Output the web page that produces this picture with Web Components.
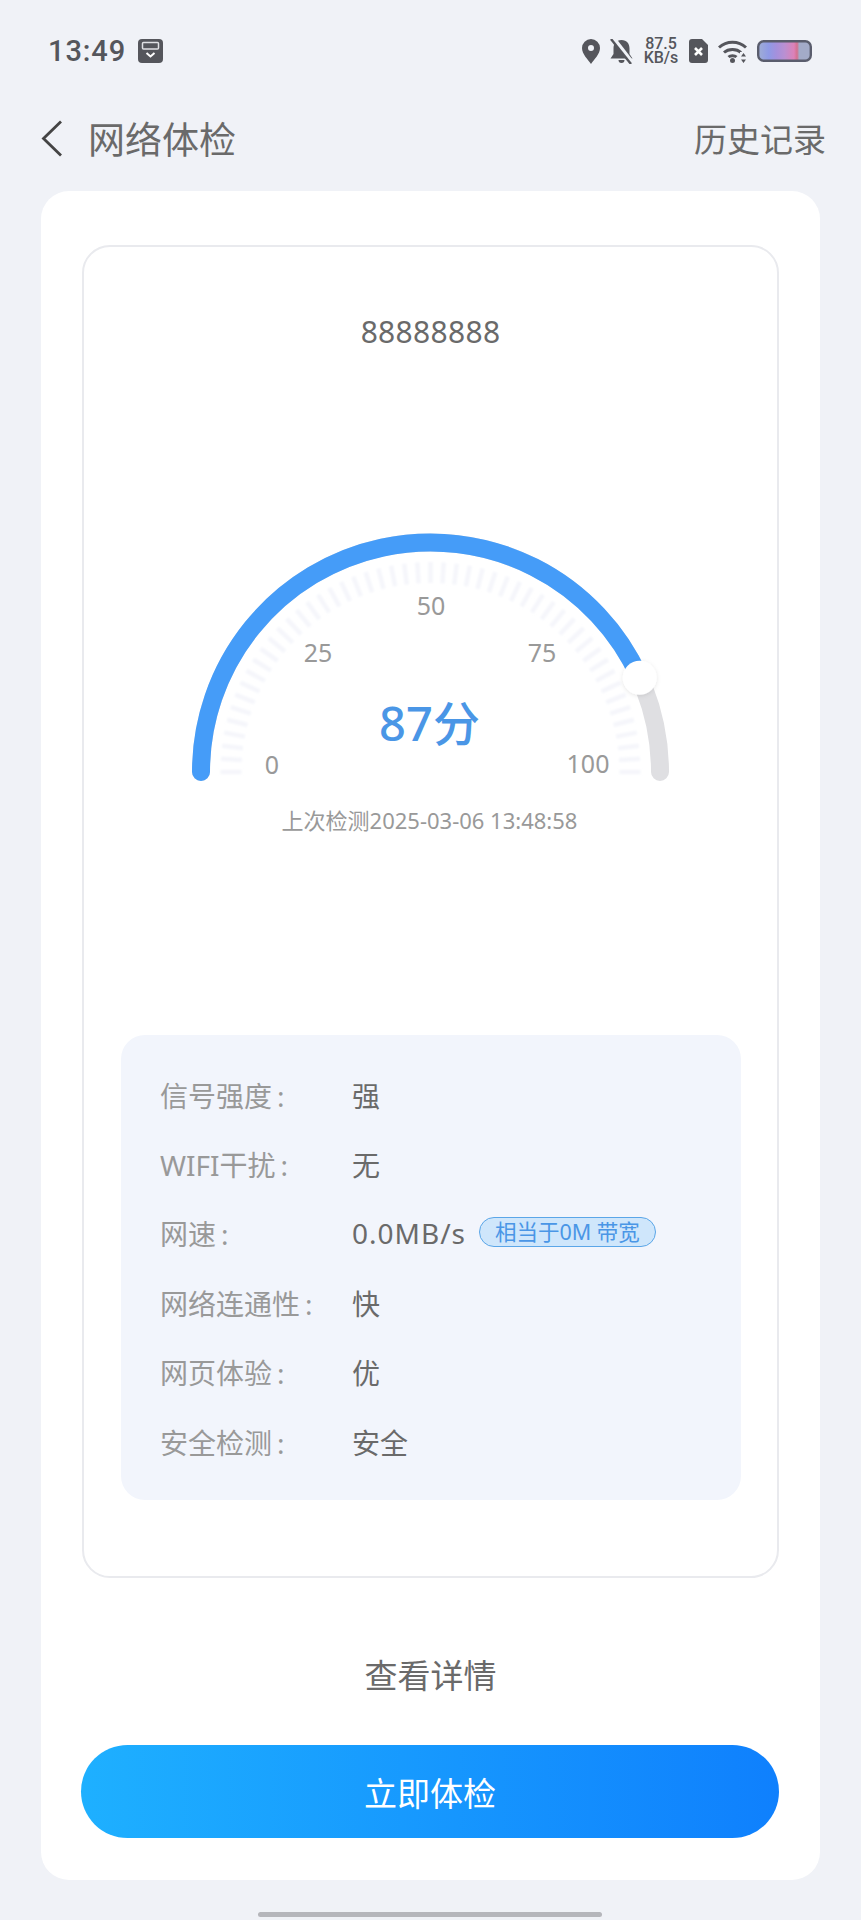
<!DOCTYPE html>
<html lang="zh">
<head>
<meta charset="utf-8">
<title>网络体检</title>
<style>
  html, body { margin: 0; padding: 0; background: #f0f2f7; }
  body { font-family: "Noto Sans", "Noto Sans CJK SC", sans-serif; width: 861px; height: 1920px; overflow: hidden; }
</style>
</head>
<body>
<net-check-page>
  <status-bar slot="status"></status-bar>
  <nav-bar slot="nav" heading="网络体检" action="历史记录"></nav-bar>
  <report-card slot="card" ssid="88888888">
    <score-gauge slot="gauge" score="87" checked="上次检测2025-03-06 13:48:58"></score-gauge>
    <info-panel slot="info">
      <info-row label="信号强度" value="强"></info-row>
      <info-row label="WIFI干扰" value="无"></info-row>
      <info-row label="网速" value="0.0MB/s" badge="相当于0M 带宽"></info-row>
      <info-row label="网络连通性" value="快"></info-row>
      <info-row label="网页体验" value="优"></info-row>
      <info-row label="安全检测" value="安全"></info-row>
    </info-panel>
  </report-card>
</net-check-page>

<script>
// small helper, every element just sets its shadow html once
class Base extends HTMLElement {
  render(html) {
    this.attachShadow({mode: 'open'}).innerHTML = html;
  }
}

class NetCheckPage extends Base {
  constructor() {
    super();
    this.render(`
      <style>
        :host { display: flex; flex-direction: column; width: 861px; height: 1920px; position: relative; }
        .sheet {
          margin: 0 41px;
          height: 1689px;
          box-sizing: border-box;
          background: #fff;
          border-radius: 28px;
          padding: 54px 41px 0;
        }
        .detail {
          height: 167px;
          display: flex;
          align-items: center;
          justify-content: center;
          font-size: 33px;
          color: #6a6a6a;
          box-sizing: border-box;
          padding-top: 56px;
          padding-bottom: 31px;
        }
        .go {
          height: 93px;
          margin-left: -1px;
          border-radius: 47px;
          background: linear-gradient(90deg, #1eb0ff, #0f80fd);
          color: #fff;
          font-size: 33px;
          display: flex;
          align-items: center;
          justify-content: center;
        }
        .home { position: absolute; left: 258px; top: 1912px; width: 344px; height: 5px; border-radius: 3px; background: #b5b6bb; }
      </style>
      <slot name="status"></slot>
      <slot name="nav"></slot>
      <div class="sheet">
        <slot name="card"></slot>
        <div class="detail">查看详情</div>
        <div class="go">立即体检</div>
      </div>
      <div class="home"></div>
    `);
  }
}

class StatusBar extends Base {
  constructor() {
    super();
    this.render(`
      <style>
        :host { display: flex; align-items: center; height: 102px; padding: 0 49px 0 48px; box-sizing: border-box; color: #55565c; }
        .time { font: 500 29px Roboto, sans-serif; letter-spacing: 0.9px; }
        .left { display: flex; align-items: center; gap: 12px; }
        .right { margin-left: auto; display: flex; align-items: center; gap: 10px; }
        svg { display: block; }
        .speed { font: 500 16px/14px Roboto, sans-serif; text-align: center; width: 36px; }
      </style>
      <div class="left">
        <span class="time">13:49</span>
        <svg width="25" height="24" viewBox="0 0 25 24">
          <rect width="25" height="24" rx="4" fill="#55565c"/>
          <rect x="4.500" y="3.500" width="16" height="6.500" rx="1" fill="none" stroke="#dfe0e4" stroke-width="1.500"/>
          <path fill="none" stroke="#fff" stroke-width="2" d="M8.500 14l4 3.500 4-3.500"/>
        </svg>
      </div>
      <div class="right">
        <svg width="18" height="25" viewBox="0 0 18 25"><path fill="#55565c" fill-rule="evenodd" d="M9 0a9 9 0 0 1 9 9c0 6.200-6 11.500-9 16C6 20.500 0 15.200 0 9a9 9 0 0 1 9-9zm0 6a3 3 0 1 0 0 6 3 3 0 0 0 0-6z"/></svg>
        <svg width="23" height="25" viewBox="0 0 23 25"><path fill="#55565c" d="M11.500 1c5.500 0 8 4 8 8.500V15l3 4.500H.5l3-4.500V9.500C3.500 5 6 1 11.500 1zM8.500 21h6a3 3 0 0 1-6 0z"/><path stroke="#f0f2f7" stroke-width="4.500" d="M3 -1l20 26"/><path stroke="#55565c" stroke-width="2.400" d="M1 0l20 25"/></svg>
        <div class="speed">87.5 KB/s</div>
        <svg width="19" height="24" viewBox="0 0 19 24"><path fill="#55565c" d="M3 0h10l6 6v15a3 3 0 0 1-3 3H3a3 3 0 0 1-3-3V3a3 3 0 0 1 3-3z"/><path stroke="#fff" stroke-width="2.600" d="M6 9l7 7M13 9l-7 7"/></svg>
        <svg width="29" height="23" viewBox="0 0 29 23"><g fill="none" stroke="#55565c" stroke-width="3"><path d="M1 7.500C8.500 .5 20.500 .5 28 7.500"/><path d="M6 12.500c4.500-4 12.500-4 17 0"/><path d="M10.500 17c2-1.800 6-1.800 8 0"/></g><circle cx="14.500" cy="20.500" r="2.500" fill="#55565c"/><path fill="#f0f2f7" d="M22 12h7v11h-7z"/><path fill="#55565c" d="M25.500 13l2.500 3.500h-5zM25.500 23L23 19.500h5z"/></svg>
        <svg width="55" height="22" viewBox="0 0 55 22">
          <defs><linearGradient id="b"><stop offset="0" stop-color="#a0aed4"/><stop offset=".2" stop-color="#8f9ae6"/><stop offset=".35" stop-color="#a590dc"/><stop offset=".5" stop-color="#b990d2"/><stop offset=".68" stop-color="#dc82b8"/><stop offset=".74" stop-color="#d4708e"/><stop offset=".78" stop-color="#a3abc8"/><stop offset="1" stop-color="#a3abc8"/></linearGradient></defs>
          <rect x="1.200" y="1.200" width="52.600" height="19.600" rx="5.500" fill="url(#b)" stroke="#5a5d6d" stroke-width="2.400"/>
        </svg>
      </div>
    `);
  }
}

class NavBar extends Base {
  constructor() {
    super();
    const heading = this.getAttribute('heading');
    const action = this.getAttribute('action');
    this.render(`
      <style>
        :host { display: flex; align-items: center; height: 89px; padding: 0 35px 17px 41px; box-sizing: border-box; }
        svg { display: block; margin-right: 25px; }
        .t { font-size: 37px; color: #6a6a6a; }
        .a { margin-left: auto; font-size: 33px; color: #6a6a6a; }
      </style>
      <svg width="22" height="37" viewBox="0 0 22 37"><path fill="none" stroke="#444" stroke-width="2.800" d="M20 1.500L2.500 18.500 20 35.500"/></svg>
      <span class="t">${heading}</span>
      <span class="a">${action}</span>
    `);
  }
}

class ReportCard extends Base {
  constructor() {
    super();
    const ssid = this.getAttribute('ssid');
    this.render(`
      <style>
        :host {
          display: block;
          height: 1333px;
          box-sizing: border-box;
          border: 2px solid #e9eaee;
          border-radius: 28px;
          padding: 0 30px;
        }
        .ssid { height: 170px; padding-top: 65px; box-sizing: border-box; text-align: center; font-size: 30px; line-height: 40px; color: #6a6a6a; letter-spacing: .3px; }
      </style>
      <div class="ssid">${ssid}</div>
      <slot name="gauge"></slot>
      <slot name="info"></slot>
    `);
  }
}

class ScoreGauge extends Base {
  constructor() {
    super();
    const score = Number(this.getAttribute('score'));
    const checked = this.getAttribute('checked');
    // svg origin sits at page (114, 417)
    const cx = 316.5, cy = 355, r = 229.5;
    const pt = (deg, rad) => {
      const a = deg * Math.PI / 180;
      return [cx - rad * Math.cos(a), cy - rad * Math.sin(a)];
    };
    const arc = (from, to) => {
      const [x0, y0] = pt(from, r);
      const [x1, y1] = pt(to, r);
      return `M${x0.toFixed(2)} ${y0.toFixed(2)}A${r} ${r} 0 0 1 ${x1.toFixed(2)} ${y1.toFixed(2)}`;
    };
    let ticks = '';
    for (let d = 0; d <= 180; d += 3.6) {
      const [a, b] = pt(d, 189);
      const [c, e] = pt(d, 210);
      ticks += `<line x1="${a.toFixed(1)}" y1="${b.toFixed(1)}" x2="${c.toFixed(1)}" y2="${e.toFixed(1)}"/>`;
    }
    // thumb sits a touch short of the true 1.8deg per point
    const end = score * 1.79;
    const [tx, ty] = pt(end, r);
    this.render(`
      <style>
        :host { display: block; height: 618px; }
        svg { display: block; overflow: visible; }
        text { font-family: "Noto Sans", "Noto Sans CJK SC", sans-serif; }
        .n { font-size: 25px; fill: #999; text-anchor: middle; dominant-baseline: central; }
      </style>
      <svg width="625" height="448" viewBox="0 0 625 448">
        <defs>
          <filter id="s" x="-40%" y="-40%" width="180%" height="180%"><feDropShadow dx="0" dy="1" stdDeviation="2" flood-color="#000" flood-opacity=".1"/></filter>
          <filter id="soft" x="-5%" y="-5%" width="110%" height="110%"><feGaussianBlur stdDeviation="1"/></filter>
        </defs>
        <g stroke="#f5f6fb" stroke-width="4.500" filter="url(#soft)">${ticks}</g>
        <path d="${arc(0, 180)}" fill="none" stroke="#dfdfe2" stroke-width="18" stroke-linecap="round"/>
        <path d="${arc(0, end)}" fill="none" stroke="#459cf8" stroke-width="18" stroke-linecap="round"/>
        <circle cx="${tx.toFixed(1)}" cy="${ty.toFixed(1)}" r="17" fill="#fff" filter="url(#s)"/>
        <text class="n" x="158" y="347">0</text>
        <text class="n" x="204" y="235">25</text>
        <text class="n" x="317" y="188">50</text>
        <text class="n" x="428" y="235">75</text>
        <text class="n" x="474" y="346">100</text>
        <text x="315.500" y="306" font-size="47" font-weight="500" fill="#4a96e6" text-anchor="middle" dominant-baseline="central">${score}分</text>
        <text x="315.500" y="403" font-size="22" fill="#999" text-anchor="middle" dominant-baseline="central">${checked}</text>
      </svg>
    `);
  }
}

class InfoPanel extends Base {
  constructor() {
    super();
    this.render(`
      <style>
        :host { display: flex; flex-direction: column; height: 465px; width: 620px; box-sizing: border-box; padding: 25px 0 0 39px; margin-left: 7px; background: #f2f5fc; border-radius: 24px; }
      </style>
      <slot></slot>
    `);
  }
}

class InfoRow extends Base {
  constructor() {
    super();
    const badge = this.getAttribute('badge');
    const value = this.getAttribute('value');
    this.render(`
      <style>
        :host { display: flex; align-items: center; height: 69.400px; font-size: 28px; }
        .l { width: 192px; color: #999; }
        .c { margin-left: 5px; }
        .v { color: #6a6a6a; }
        .latin { letter-spacing: 1px; }
        .b { margin: -3px 0 0 13px; height: 28px; padding: 0 15px; border: 1px solid #5ba6e8; border-radius: 15px; background: #cfe6fb; color: #4a96e6; font-size: 21.500px; line-height: 28px; }
      </style>
      <span class="l">${this.getAttribute('label')}<span class="c">:</span></span>
      <span class="v ${badge ? 'latin' : ''}">${value}</span>
      ${badge ? `<span class="b">${badge}</span>` : ''}
    `);
  }
}

customElements.define('net-check-page', NetCheckPage);
customElements.define('status-bar', StatusBar);
customElements.define('nav-bar', NavBar);
customElements.define('report-card', ReportCard);
customElements.define('score-gauge', ScoreGauge);
customElements.define('info-panel', InfoPanel);
customElements.define('info-row', InfoRow);
</script>
</body>
</html>
